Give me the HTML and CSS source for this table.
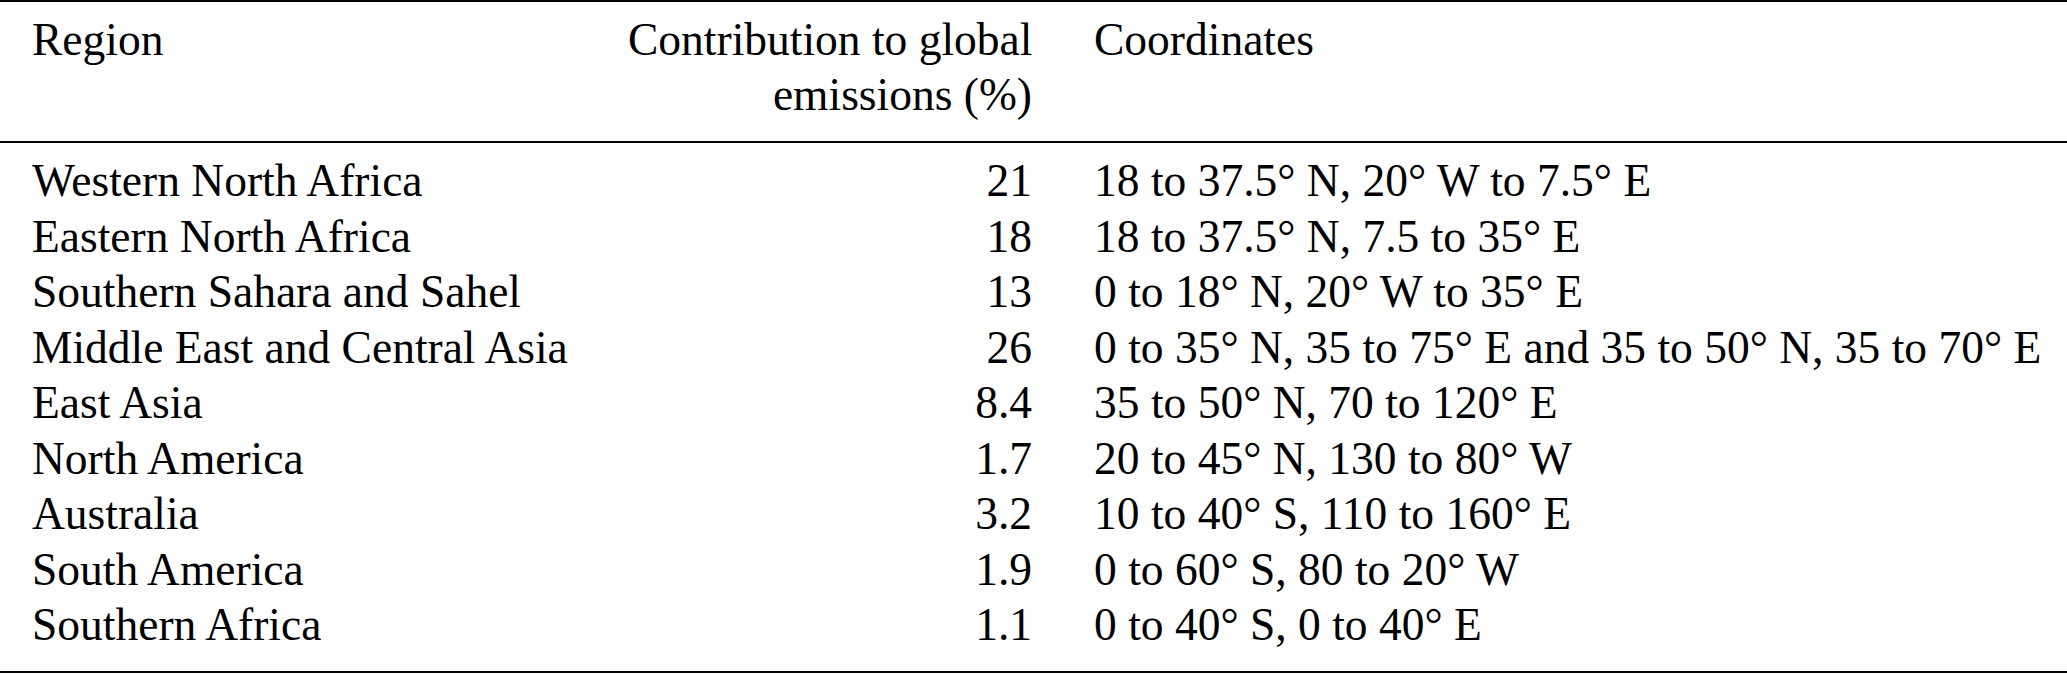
FILE: index.html
```html
<!DOCTYPE html>
<html lang="en">
<head>
    <meta charset="UTF-8">
    <meta name="viewport" content="width=device-width, initial-scale=1.0">
    <title>Dust emission regions</title>
    <link rel="stylesheet" href="styles.css">
</head>
<body>
    <table class="regions">
        <thead>
            <tr>
                <th class="col-region">Region</th>
                <th class="col-share">Contribution to global<br>emissions (%)</th>
                <th class="col-coords">Coordinates</th>
            </tr>
        </thead>
        <tbody>
            <tr><td>Western North Africa</td><td class="num">21</td><td>18 to 37.5° N, 20° W to 7.5° E</td></tr>
            <tr><td>Eastern North Africa</td><td class="num">18</td><td>18 to 37.5° N, 7.5 to 35° E</td></tr>
            <tr><td>Southern Sahara and Sahel</td><td class="num">13</td><td>0 to 18° N, 20° W to 35° E</td></tr>
            <tr><td>Middle East and Central Asia</td><td class="num">26</td><td>0 to 35° N, 35 to 75° E and 35 to 50° N, 35 to 70° E</td></tr>
            <tr><td>East Asia</td><td class="num">8.4</td><td>35 to 50° N, 70 to 120° E</td></tr>
            <tr><td>North America</td><td class="num">1.7</td><td>20 to 45° N, 130 to 80° W</td></tr>
            <tr><td>Australia</td><td class="num">3.2</td><td>10 to 40° S, 110 to 160° E</td></tr>
            <tr><td>South America</td><td class="num">1.9</td><td>0 to 60° S, 80 to 20° W</td></tr>
            <tr><td>Southern Africa</td><td class="num">1.1</td><td>0 to 40° S, 0 to 40° E</td></tr>
        </tbody>
    </table>
</body>
</html>
```

FILE: styles.css
```css
*{
    margin: 0;
    padding: 0;
}

body{
    background-color: #ffffff;
    color: #000000;
    font-family: "Liberation Serif", "Times New Roman", serif;
    font-size: 45.5px;
    line-height: 55.5px;
}

.regions{
    width: 100%;
    border-collapse: separate;
    border-spacing: 0;
    table-layout: fixed;
}

.regions th,
.regions td{
    padding: 0 32px;
    font-weight: normal;
    text-align: left;
    vertical-align: top;
    white-space: nowrap;
}

.col-region{
    width: 532px;
}
.col-share{
    width: 404px;
}

/* top and mid rules */
.regions th{
    border-top: 2px solid #000;
    border-bottom: 2px solid #000;
    padding-top: 10px;
    padding-bottom: 19px;
    line-height: 55px;
}

.regions th.col-share,
.regions td.num{
    text-align: right;
}

.regions th.col-coords,
.regions td:last-child{
    padding-left: 30px;
}

.regions tbody tr:first-child td{
    padding-top: 10px;
}

/* bottom rule */
.regions tbody tr:last-child td{
    padding-bottom: 18px;
    border-bottom: 2px solid #000;
}
```
